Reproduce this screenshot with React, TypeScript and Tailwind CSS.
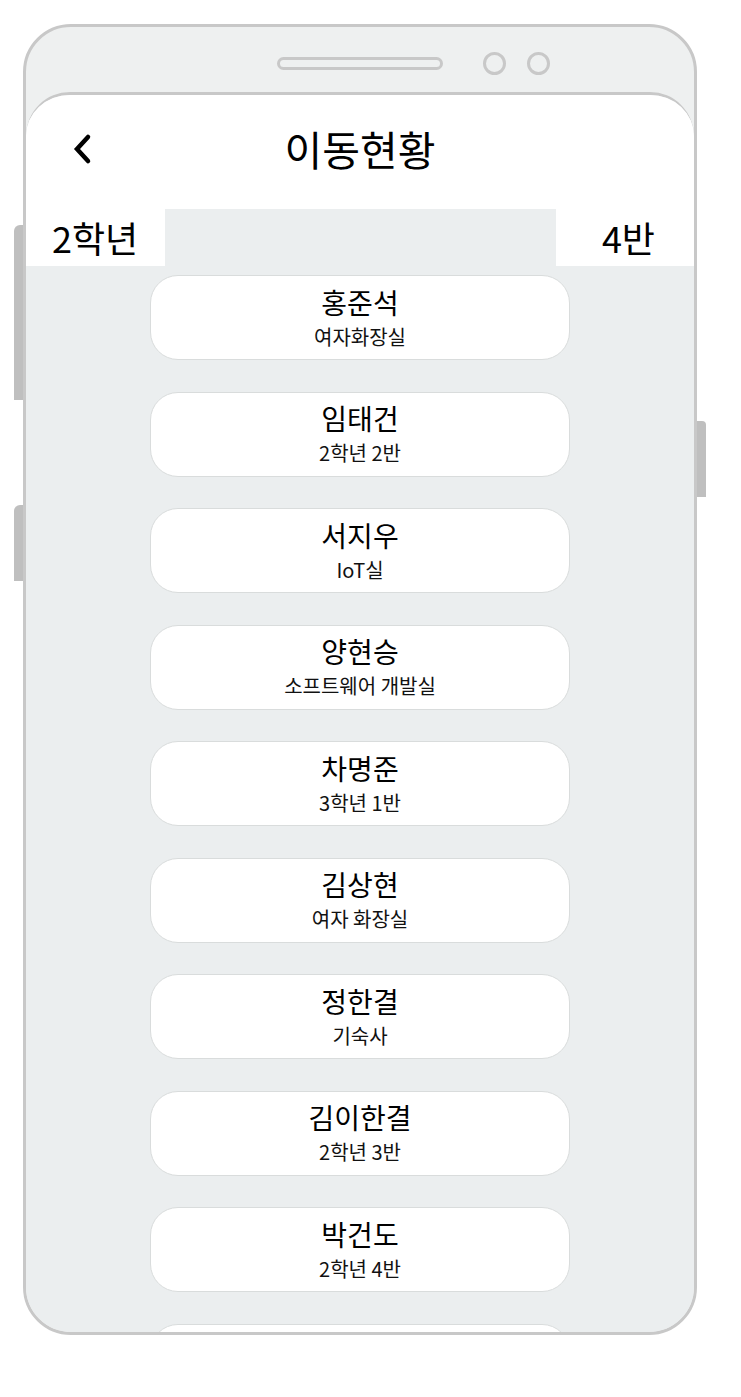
import React from "react";

const moves = [
  { name: "홍준석", place: "여자화장실" },
  { name: "임태건", place: "2학년 2반" },
  { name: "서지우", place: "IoT실" },
  { name: "양현승", place: "소프트웨어 개발실" },
  { name: "차명준", place: "3학년 1반" },
  { name: "김상현", place: "여자 화장실" },
  { name: "정한결", place: "기숙사" },
  { name: "김이한결", place: "2학년 3반" },
  { name: "박건도", place: "2학년 4반" },
  { name: "", place: "" },
];

export default function App() {
  return (
    <div
      className="h-[1397px] w-[741px] bg-white"
      style={{ fontFamily: '"Noto Sans CJK KR", "Noto Sans", sans-serif' }}
    >
      <div className="relative ml-[23px] pt-[24px] w-[674px]">
        {/* side buttons */}
        <div className="absolute left-[-9px] top-[225px] h-[175px] w-[9px] rounded-tl-[6px] bg-[#bfbfbf]" />
        <div className="absolute left-[-9px] top-[505px] h-[76px] w-[9px] rounded-tl-[6px] bg-[#bfbfbf]" />
        <div className="absolute right-[-9px] top-[421px] h-[76px] w-[9px] rounded-tr-[4px] bg-[#bfbfbf]" />

        <div className="flex h-[1311px] flex-col overflow-hidden rounded-[48px] border-[3px] border-[#c8c8c8] bg-[#eef0f0]">
          {/* top bezel */}
          <div className="flex h-[65px] shrink-0 items-center justify-center pl-[107px] pt-[7px]">
            <div className="h-[13px] w-[166px] rounded-full border-[3px] border-[#c8c8c8]" />
            <div className="ml-[40px] h-[23px] w-[23px] rounded-full border-[3px] border-[#c8c8c8]" />
            <div className="ml-[21px] h-[23px] w-[23px] rounded-full border-[3px] border-[#c8c8c8]" />
          </div>

          {/* screen */}
          <div className="flex min-h-0 flex-1 flex-col overflow-hidden rounded-t-[44px] border-t-[3px] border-[#c8c8c8] bg-[#ebeeef]">
            <div className="bg-white">
              <div className="relative flex h-[114px] items-center justify-center pb-[8px]">
                <svg
                  className="absolute left-[44px] top-[38px]"
                  width="24"
                  height="32"
                  viewBox="0 0 24 32"
                  fill="none"
                >
                  <path
                    d="M18 4 L7 16 L18 28"
                    stroke="#000"
                    strokeWidth="4.5"
                    strokeLinecap="round"
                    strokeLinejoin="miter"
                  />
                </svg>
                <h1 className="text-[41px] font-normal leading-none text-black">
                  이동현황
                </h1>
              </div>
              <div className="flex h-[57px]">
                <div className="flex w-[139px] items-center pl-[26px] pb-[2px] text-[36px] font-normal text-black">
                  2학년
                </div>
                <div className="flex-1 bg-[#ebeeef]" />
                <div className="flex w-[138px] items-center justify-end pr-[39px] pb-[2px] text-[36px] font-normal text-black">
                  4반
                </div>
              </div>
            </div>

            <div className="flex flex-col gap-[31.5px] pt-[9px]">
              {moves.map((m, idx) => (
                <div
                  key={idx}
                  className="mx-auto flex h-[85px] w-[420px] shrink-0 flex-col items-center justify-center rounded-[28px] border border-[#d9dcdc] bg-white"
                >
                  <p className="text-[28px] font-normal leading-[30px] text-black">
                    {m.name}
                  </p>
                  <p className="mt-[8px] text-[20px] font-normal leading-[24px] text-[#111]">
                    {m.place}
                  </p>
                </div>
              ))}
            </div>
          </div>
        </div>
      </div>
    </div>
  );
}
